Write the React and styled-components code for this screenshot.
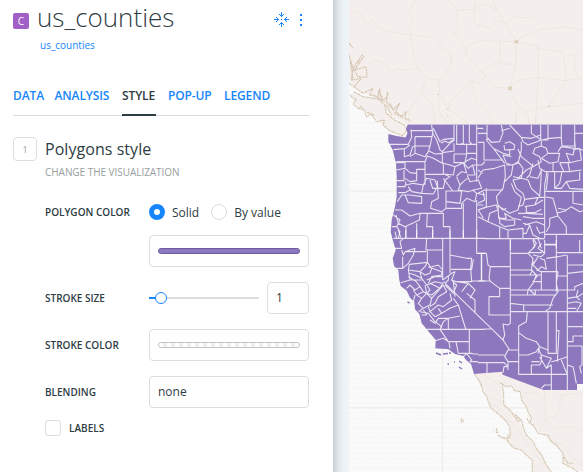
import React from "react";
import styled, { createGlobalStyle } from "styled-components";

const Global = createGlobalStyle`
  * { box-sizing: border-box; }
  body { margin: 0; background: #fff; font-family: "Open Sans", sans-serif; color: #2e3c43; }
`;

const Layout = styled.div`
  display: flex;
  width: 583px;
  height: 472px;
  overflow: hidden;
`;
const Panel = styled.aside`
  width: 333px;
  flex: none;
  padding: 0 24px 0 13px;
  background: #fff;
`;
const Gutter = styled.div`
  width: 16px;
  flex: none;
  background: linear-gradient(90deg, #cdd0d3 0, #d8dcdf 3px, #e5e9ed 6px, #edf2f6 10px, #eff4f8 16px);
`;
const Header = styled.header`
  display: flex;
  height: 36px;
  align-items: flex-start;
`;
const Badge = styled.span`
  width: 16px;
  height: 16px;
  margin: 13px 8px 0 0;
  border-radius: 2px;
  background: #a35fc8;
  color: #fff;
  font-size: 10px;
  line-height: 16px;
  text-align: center;
`;
const Title = styled.h1`
  flex: 1;
  margin: 0;
  font-size: 26px;
  font-weight: 300;
  line-height: 34px;
`;
const Actions = styled.div`
  display: flex;
  margin: 12px 6px 0 0;
  gap: 10px;
`;
const Source = styled.a`
  display: block;
  height: 18px;
  margin-left: 27px;
  font-size: 10px;
  line-height: 19px;
  color: #1785fb;
`;
const Tabs = styled.nav`
  display: flex;
  gap: 12px;
  height: 37px;
  margin-top: 25px;
  border-bottom: 1px solid #ddd;
`;
const Tab = styled.a`
  height: 37px;
  width: ${(p) => p.$w}px;
  white-space: nowrap;
  font-size: 12px;
  font-weight: 600;
  line-height: 33px;
  letter-spacing: -0.12px;
  color: ${(p) => (p.$active ? "#2e3c43" : "#1785fb")};
  border-bottom: ${(p) => (p.$active ? "2px solid #2e3c43" : "0")};
`;
const Section = styled.section`
  display: flex;
  margin-top: 21px;
  gap: 8px;
`;
const Step = styled.span`
  width: 24px;
  height: 24px;
  border: 1px solid #ddd;
  border-radius: 4px;
  color: #979ea1;
  font-size: 9px;
  line-height: 24px;
  text-align: center;
`;
const Body = styled.div`
  flex: 1;
`;
const Heading = styled.h2`
  margin: 0;
  font-size: 16px;
  font-weight: 400;
  line-height: 24px;
  letter-spacing: 0.05px;
`;
const Hint = styled.p`
  margin: 0 0 20px;
  font-size: 10px;
  line-height: 22px;
  letter-spacing: -0.04px;
  color: #979ea1;
`;
const Row = styled.div`
  display: flex;
  align-items: center;
  height: ${(p) => p.$h || 32}px;
  margin-bottom: ${(p) => p.$gap || 0}px;
`;
const Label = styled.label`
  width: 104px;
  flex: none;
  font-size: 10px;
  font-weight: 600;
  white-space: nowrap;
`;
const Choice = styled.span`
  display: flex;
  align-items: center;
  gap: 7px;
  font-size: 12px;
  margin-right: 12px;
`;
const Radio = styled.i`
  width: 16px;
  height: 16px;
  border-radius: 50%;
  background: #fff;
  border: ${(p) => (p.$on ? "5px solid #1785fb" : "1px solid #ddd")};
`;
const Field = styled.div`
  display: flex;
  align-items: center;
  width: ${(p) => p.$w || 160}px;
  height: 32px;
  padding: 0 8px;
  border: 1px solid #ddd;
  border-radius: 4px;
  font-size: 12px;
  line-height: 16px;
`;
const Swatch = styled.div`
  flex: 1;
  height: 6px;
  border-radius: 3px;
  border: 1px solid ${(p) => (p.$solid ? "#6f5b9f" : "#c4c4c4")};
  background: ${(p) =>
    p.$solid ? "#8d79c0" : "repeating-conic-gradient(#eee 0 25%, #fff 0 50%) 0 0 / 8px 8px"};
`;
const Slider = styled.div`
  display: flex;
  align-items: center;
  width: 110px;
  margin-right: 8px;
`;
const Track = styled.i`
  height: 2px;
  width: ${(p) => p.$w}px;
  background: ${(p) => (p.$filled ? "#1785fb" : "#ddd")};
`;
const Knob = styled.i`
  width: 12px;
  height: 12px;
  border: 1px solid #1785fb;
  border-radius: 50%;
`;
const Checkbox = styled.i`
  width: 16px;
  height: 16px;
  margin-right: 8px;
  border: 1px solid #ddd;
  border-radius: 3px;
`;
const MapSvg = styled.svg`
  display: block;
  flex: none;
  background: #fafafa;
`;

const ROADS_NORTH = `M48 25 L62 38 L75 30 L100 75 L115 58 L135 80 L165 95 L235 105 L245 190 L256 205 L285 237 L318 241 L320 280 L345 328 L355 300 L385 275 L415 242 L440 250 L460 225
M245 105 L300 112 L330 145 L355 160 L355 195 L330 230 L320 240 M235 105 L228 85 L240 60 L228 38 L240 10 L255 0 M345 0 L370 30 L375 80 L360 103 L375 110 L395 140 L400 165 L435 205 L490 262 L530 265 L550 310 L585 350 L590 375
M395 160 L410 135 L445 122 L550 125 L570 110 L620 90 L690 80 L750 90 M370 30 L425 28 L450 12 L490 28 L515 70 L550 125 M425 0 L423 70 L470 85 L490 60 L515 70 L545 50 L600 55 M480 0 L492 30 M550 125 L550 190 L530 265 M550 125 L615 140 L615 235 L607 375 M615 145 L690 155 L700 240 L645 320 L575 337 M440 215 L490 187 L545 195 M502 125 L502 185 M530 260 L565 240 L620 232 L690 242 L750 235 M700 170 L740 160 M725 170 L725 210 L740 235
M260 205 L220 210 L190 208 L170 218 L155 190 L130 180 L110 190 M265 275 L230 330 L225 370 M265 275 L280 237 M265 275 L300 315 L305 370 M315 283 L320 340 L345 370 M345 328 L375 345 L410 375 M415 242 L430 310 L460 330 L480 375 M550 330 L550 375 M645 320 L750 310`;
const COAST = `M48 130 L60 143 M48 165 L60 205 L88 165 L92 170 L65 210 L100 200 L102 232 L75 230 L60 205 L55 240 L85 235 L65 258 M52 185 L60 235 M70 190 L80 180 M48 250 L90 280 L120 265 L110 285 L135 290 L140 265 L145 300 L160 295 L165 275 L160 305 L180 330 L200 310 L185 340 L205 350 L220 335 L215 355 L233 362
M62 275 L90 290 L135 297 L155 315 L160 340 L185 360 L215 375 L222 390 L210 407 L170 392 L150 375 L155 360 L130 365 L115 342 L100 350 L95 330 L75 325 L60 312 L70 300 L50 285 M80 318 L92 325 M102 337 L125 345 M170 310 L180 325 M120 285 L155 305 M135 275 L150 295 M160 315 L175 345 M190 335 L210 355`;

const NORTHWEST = `M27 103 H85 L95 82 L93 58 M95 62 H160 M105 80 L155 79 M40 119 L75 116 L90 105 M73 115 V140 L90 135 L98 110 L105 108 H150 M105 80 V130 L90 140 M155 45 L158 70 L155 85 L150 108 L145 125 L135 140 L105 130 M160 55 L170 75 L180 95 L190 88 L222 85 M158 70 L170 90 L180 120 L187 125 L210 100 L222 92 V45
M230 45 V103 H290 M250 45 V100 L240 103 M268 44 V95 L275 102 M290 45 V215 M310 55 H290 M183 100 L195 93 L205 98 L220 90 M145 122 L165 132 L187 130 V160 L160 145 L142 138 L135 155 H50 M187 128 L222 123 V100 M222 132 H260 V103 M260 130 H290 M222 132 V158 H255 L260 132 M255 155 L275 145 L290 150
M45 158 H75 V175 M135 157 V225 M135 193 H190 V160 L210 165 M192 192 L220 195 L225 170 L210 165 M225 170 L250 158 L260 188 L245 185 L230 198 M250 158 L265 175 L278 165 L285 195 H260 M280 165 L305 165 L315 155 M50 180 L75 175 L90 188 L110 190 V178 H135 M72 180 V212 H50 M75 205 L90 215 L110 212 V190
M52 230 H75 L78 215 M78 225 L100 220 L130 225 L125 250 L95 245 L85 230 M55 248 H75 L90 240 M52 275 L65 255 L90 255 L125 260 V280 L85 278 L75 255 M125 250 L160 252 L172 230 L165 210 L140 205 L130 225 M150 210 L158 235 H190 L195 210 L210 200 L192 192 M172 212 L175 265 L155 275 L152 295 L185 305 L198 295 V243 H245 L240 280 L200 275 M45 300 L65 300 L90 318 L120 310 L118 330 L75 350 L55 340 L48 315
M120 310 H190 V350 H210 V385 M142 310 L140 350 H158 V385 M78 350 V385 M110 340 V385 M245 280 V295 L200 295 M250 280 V385 M290 270 V385 M190 205 L205 225 L218 243 M230 200 L240 225 L235 240 L265 245 L280 240 L305 235 L295 210 L270 215 L262 198 M240 225 L250 215 L262 205 M245 280 L260 265 L285 275 L290 250 L278 240 M290 250 L315 255 M292 285 H310 M295 300 L310 325 M40 315 L60 330 L50 350 L60 365 L55 385 M35 350 L50 350`;
const ROCKIES = `M27 45 V85 L40 95 M0 70 H27 M0 97 H18 V150 H75 M70 45 L75 68 L65 95 L40 97 L30 85 L25 90 L50 120 L80 160 M70 62 L95 55 M95 45 L130 82 L160 85 L188 75 M160 45 V70 L190 90 M188 45 V90 H210 V45 M250 45 V83 L252 108 H290 V45 M290 70 H315 M290 90 L292 115 L315 120
M130 82 L135 95 L150 105 L190 90 L215 85 L250 82 M80 100 L95 95 L110 105 L108 118 L80 120 L78 105 M95 118 V135 L75 130 L45 115 M130 95 V120 L120 160 L100 165 L85 160 L75 135 L100 140 M120 118 L130 140 L155 160 L165 170 L190 155 L185 140 L165 130 L170 115 L190 108 L205 115 L210 130 L190 145 M190 108 V93 M190 145 L215 160 L240 155 L245 130 L210 130 M240 125 L250 110 L290 115 L285 135 L265 130 L275 158 L245 158 M285 120 L305 115 L310 150 L275 158
M225 158 V185 H202 L185 175 L180 150 M245 158 L258 185 H225 M258 185 L275 185 L270 158 M275 185 L310 180 M230 185 V235 L245 220 L252 185 M210 190 L205 240 M230 235 L250 235 L265 215 L305 210 V185 M265 215 L275 235 L315 238
M0 205 L15 180 L50 175 L80 165 L82 200 L75 235 L55 260 L60 285 L75 300 L85 295 M0 180 L15 190 M0 250 L20 240 H75 M25 235 V290 L0 300 M15 240 L20 270 L0 280 M0 300 L30 290 L55 285 L60 300 L35 310 L30 335 L0 320 M85 165 H105 L100 195 L80 215 M105 165 L120 155 L135 175 L130 205 L105 200 M120 205 L145 180 L175 165 M145 205 L155 195 L165 160 M155 200 L180 205 L190 180 M190 180 L188 225 L185 258 L160 235 L150 210 L130 205 L105 210 L115 235 L135 250 L140 268 L185 262 L198 262 M100 220 L110 245 L130 262 L120 300 L95 310 L65 290
M200 260 V385 M200 244 H315 M207 185 L200 225 V260 M200 260 L225 265 L240 318 L215 325 V347 L205 365 M240 318 L265 350 V373 H315 M200 373 H265 M285 245 V280 L315 285 M240 295 L265 300 L280 290 L305 305 L315 302 M235 310 L265 302 M235 373 V415
M140 268 L135 285 L120 290 M140 290 L170 285 L180 262 M145 290 V308 H170 L190 298 M170 285 L195 270 M120 310 H145 L195 313 M135 320 L165 325 H198 M60 285 L62 325 L85 330 H110 V345 L80 350 L65 340 L65 320 M65 325 L85 325 L80 310 L105 325 L130 330 M30 335 L65 350 V385 M65 350 L90 360 L135 355 V385 M90 362 V385 M135 340 L155 345 L165 375 L185 385 M140 345 L175 335 L200 345 M155 345 L145 370 L135 370 M175 350 L185 370 L200 365 M165 385 L175 400 L165 415 M180 385 L190 415 M20 386 H200 M97 386 V420 M200 403 H235`;
const CALIFORNIA = `M40 25 H315 M77 0 V25 M110 0 V25 M158 0 V25 M210 0 V25 M250 0 V25 M290 0 V25 M55 0 L62 22 M45 5 L50 25 M45 55 H65 L60 35 L70 25 M65 60 L70 75 L75 65 L105 55 L100 75 L85 100 L68 115 H50 M68 80 V115 M140 25 L138 60 H188 M75 65 H138 M142 60 V97 L88 103 L85 120 L90 150 L62 158 M188 25 V150 M210 25 V130 M210 75 L225 78 L260 85 H275 L272 115 L275 155 H230 M280 88 L275 118 H213 M305 70 V153 H275 M290 25 V70 H315 M300 153 H315
M85 120 L120 125 L135 110 L142 97 M120 125 L125 145 L105 135 L88 130 M142 97 L155 115 L150 130 L135 135 L120 125 M145 110 L185 125 V135 L155 140 L145 160 M155 110 L175 105 L188 120 M140 150 L165 140 L188 140 M125 145 L140 165 L165 155 L188 160 L180 175 L150 160 M90 150 L105 150 L120 170 L105 180 L90 165 L80 175 M85 140 L110 155 M105 150 L125 150 M120 170 L130 185 L110 195 L100 180 M135 165 L140 190 L130 185 M140 165 L150 180 L140 190 L155 195 L185 170 M105 195 L100 215 M110 195 L125 205 L115 220 L130 235 M125 205 L140 190 L155 205 L150 225 L130 235 L115 245 M155 205 L190 165 L200 185 L175 200 L165 220 L150 230 M188 150 L215 130 L225 125 L215 150 L230 165 L220 190 L195 165 M190 155 L315 277 M205 135 V150 L195 160 M220 155 L225 200 M215 150 L230 155 L265 160 L245 185 M265 160 L285 180 L270 205 M260 190 L285 210 V250 M210 190 L215 210 L190 230 L175 225 L150 245 L145 230 M175 235 L185 250 L210 235 L235 225 L220 205 M150 245 L165 260 L185 250 M120 245 L145 250 L165 275 L185 290 L180 298 M130 240 L140 255 L125 255 M150 270 L165 280 L175 265 L205 265 L240 258 M205 265 V297 M180 298 L190 275 L205 265 M235 225 L257 297 M140 298 H315 M180 298 L205 335 L190 325 L165 332 M268 298 V370 M207 335 H268 M207 335 L210 355 M228 335 L235 370 M235 370 H275 L280 372 H294 M250 380 L260 370 L275 390 L270 395 H294`;
const SOUTHWEST = `M0 40 H25 L30 75 L37 80 H97 M10 40 V123 M37 80 L33 115 L38 125 L65 145 H97 M0 123 H35 M65 145 V170 H33 V225 H97 M21 247 L40 265 L75 300 L95 330 M97 0 V250 L90 255 L75 252 L80 285 L75 300 M97 40 H150 M97 90 H160 M97 105 H190 M97 150 H268 M97 165 H235 M97 190 L140 195 H225 M137 195 V215 M97 215 H315 M21 267 H40
M200 0 V40 L180 25 L190 10 M165 0 L170 20 L150 40 L165 55 L160 90 L175 105 L165 130 L150 150 L148 165 M150 38 H190 V30 L200 40 L190 50 L165 45 M180 50 L165 75 L180 90 L190 80 L205 88 L200 60 L185 55 M175 90 L190 95 V150 M190 95 H240 M205 55 L240 50 L265 45 M235 0 V155 M200 15 H235 M235 38 H315 M235 108 H268 M268 45 V450 M160 75 L175 60 M165 90 L155 105 M180 105 L165 125 H190 M155 150 L172 165 V150 M240 95 L235 130 L240 155 L225 175 L215 205 L200 215 M268 75 H315 M268 100 L315 95 M315 130 L290 140 V150 L268 150 M268 175 L300 170 L315 160 M268 190 L295 185 L310 190 L295 215 M268 205 H295 M300 150 L295 170 L305 180 M305 0 V38
M148 217 L145 245 L122 258 V403 H268 M122 278 L145 295 L175 305 L185 320 L175 335 L150 345 H122 M210 217 V340 H235 V217 M235 272 H243 L238 365 M185 320 L210 330 M180 325 L190 345 L220 355 L205 385 L185 350 M185 325 L180 340 M190 345 V365 L185 375 H160 V403 M160 365 H185 M205 385 L220 375 V450 M220 365 L240 360 L268 350 M250 360 L260 385 L268 403 M268 260 H315 M315 288 H285 V305 H268 M268 318 H312 V375 L305 380 L310 400 M268 375 L285 380 L290 403 L295 430 M190 445 L200 435 H220 M122 330 H90 L80 350 L90 365 H122 M0 345 H80 M0 368 H78 L90 380 V390 M27 368 V400 M90 365 V380 H78 L75 398`;

const BAJA = `M425 103 L438 120 L450 155 L462 170 L466 187 L475 205 L500 225 L520 245 L530 260 L530 290 L515 292 L495 285 L505 292 L545 325 L565 330 L585 350 L600 360 L600 396 H655 L640 375 L630 345 L605 315 L590 300 L575 280 L570 260 L545 235 L550 225 L530 205 L510 185 L512 165 L505 135 L500 125 L508 95 Z`;
const MAINLAND = `M500 100 L640 151 H750 V396 L720 385 L690 370 L690 340 L655 305 L620 275 L590 250 L595 235 L580 200 L565 180 L565 160 L545 150 L535 138 L520 140 L500 127 Z`;

const third = (x, y) => `translate(${x} ${y}) scale(0.33333)`;

function CountyMap() {
  return (
    <MapSvg width="234" height="472" viewBox="349 0 234 472" fill="none">
      <defs>
        <pattern id="waves" width="6" height="5" patternUnits="userSpaceOnUse">
          <path d="M0 3 L1.5 2 L3 3 L4.5 4 L6 3" stroke="#f2f2f1" strokeWidth=".7" fill="none" />
        </pattern>
      </defs>
      <rect x="349" width="234" height="472" fill="url(#waves)" />
      <path d="M349 191H400M349 407.7H583M442.5 340V472" stroke="#f2eeeb" strokeWidth="1.4" />
      <g transform={third(333, 0)} strokeLinejoin="round">
        <path d="M48 0 H750 V380 H228 L205 362 L175 350 L150 310 L125 292 L90 280 L62 262 L48 235Z" fill="#f4efec" />
        <path d="M62 275 L90 290 L135 297 L155 315 L160 340 L185 360 L215 375 L222 390 L210 412 L170 395 L150 375 L115 345 L75 325 L50 285Z" fill="#f4efec" />
        <path d={ROADS_NORTH} stroke="#ebe2da" strokeWidth="2" />
        <path d={COAST} stroke="#d3c3ae" strokeWidth="3.4" strokeDasharray="7 1.5 4 2" />
        <path d="M544 120l12 10M556 120l-12 10M525 260l12 10M537 260l-12 10M315 282l3 3M646 318l3 3M343 327l3 3M343 346l3 3" stroke="#cdbb9c" strokeWidth="3" />
      </g>
      <g transform={third(333, 340)} strokeLinejoin="round">
        <path d={BAJA} fill="#f4efec" />
        <path d={MAINLAND} fill="#f4efec" />
        <path d="M430 110 L445 125 L440 140 M455 105 L500 135 M470 190 L510 210 M475 170 L510 190 M500 225 L540 250 L570 290 L595 330 L630 370 M635 152 L637 240 L615 280 M637 240 L675 225 L685 165 M637 240 L665 265 L715 260 L750 275 M570 160 L600 155 L635 180 M685 165 L730 160 M720 135 L750 170 M650 300 L690 315 L715 350 L750 375" stroke="#ece3db" strokeWidth="2" />
        <path d="M425 103 L438 122 L445 135 L450 155 L462 170 L466 187 L475 205 L500 225 L520 245 L530 260 L532 290 L525 295 L525 280 M495 285 L505 292 L520 295 L530 312 L545 325 L565 330 L585 350 L598 360 V396 M508 130 L512 165 L512 195 L530 210 L545 230 L565 240 L572 265 L580 285 L600 305 L610 325 L625 345 L640 375 L655 396 M500 127 L520 140 L535 138 L545 152 L562 155 L566 180 L580 200 L585 215 L595 235 L590 250 L600 255 L615 280 L630 283 L645 285 L655 305 L670 315 L690 340 L690 370 L720 385 L735 396 M547 223 L563 240 L555 245 L547 232 M582 235 L590 250 M385 235 V247 L390 246 V237 M480 270 L483 270 M490 265 L494 280 L488 275 M692 350 L705 370 L720 370" stroke="#d3c3ae" strokeWidth="3.2" strokeDasharray="8 1.5 5 2" />
      </g>
      <path
        d="M407.5 124.7 H583 V384 H577 V390 H543.7 L502.3 374.6 V371.7 L474 374 L471 364 L466 360 L463.3 356 L455 354 L448.3 349.3 L435.3 348.2 L435.7 340 L430 333.3 L421.7 323.3 L419.3 314 L415 309.3 L414.3 301.7 L410 297.7 L406.7 290.7 L400.7 286 L399.3 280 L398.3 270 L394 266 L392.7 258.3 L395.7 250 L392.7 240 L390.7 231.7 L391.7 220 L395 206.7 L396.7 196.7 L396.7 176.7 L396 163.3 L392.7 150 L388.3 141.7 V134 L396.7 136 L405.5 137.5 L407.5 133 L406 129.3Z"
        fill="#8d78bd"
      />
      <path d="M436 353l5 2M443 354l5-.5M449 353h2M459 361l3 2M459 367l3 2M447.5 364h1.5M454 362h1M407.5 302l2 1" stroke="#8d78bd" strokeWidth="1.5" />
      <path d="M408 124.5H583" stroke="#c9bddb" strokeWidth="1" />
      <g stroke="#fff" strokeOpacity=".8" strokeWidth="3.3" strokeLinejoin="round">
        <path d={NORTHWEST} transform={third(380, 110)} />
        <path d={ROCKIES} transform={third(478, 110)} />
        <path d={CALIFORNIA} transform={third(380, 230)} />
        <path d={SOUTHWEST} transform={third(478, 240)} />
      </g>
    </MapSvg>
  );
}

const TABS = [
  ["DATA", 29.5],
  ["ANALYSIS", 55.5],
  ["STYLE", 34],
  ["POP-UP", 44],
  ["LEGEND", 47],
];

export default function App() {
  return (
    <>
      <Global />
      <Layout>
        <Panel>
          <Header>
            <Badge>C</Badge>
            <Title>us_counties</Title>
            <Actions>
              <svg width="15" height="15" viewBox="0 0 15 15" fill="#1785fb" shapeRendering="crispEdges">
                <path d="M7 0h1v5h-1zM6 3h3v1h-3zM5 2h1v1h-1zM9 2h1v1h-1z" />
                <path d="M7 10h1v5h-1zM6 11h3v1h-3zM5 12h1v1h-1zM9 12h1v1h-1z" />
                <path d="M0 7h5v1h-5zM3 6h1v3h-1zM2 5h1v1h-1zM2 9h1v1h-1z" />
                <path d="M10 7h5v1h-5zM11 6h1v3h-1zM12 5h1v1h-1zM12 9h1v1h-1z" />
                <path d="M7 7h1v1h-1z" />
              </svg>
              <svg width="4" height="15" viewBox="0 0 4 15" fill="#1785fb">
                <path d="M1 2h2v2H1zM1 7h2v2H1zM1 12h2v2H1z" />
              </svg>
            </Actions>
          </Header>
          <Source>us_counties</Source>
          <Tabs>
            {TABS.map(([name, w]) => (
              <Tab key={name} $w={w} $active={name === "STYLE"}>{name}</Tab>
            ))}
          </Tabs>
          <Section>
            <Step>1</Step>
            <Body>
              <Heading>Polygons style</Heading>
              <Hint>CHANGE THE VISUALIZATION</Hint>
              <Row $h={18} $gap={14}>
                <Label>POLYGON COLOR</Label>
                <Choice><Radio $on />Solid</Choice>
                <Choice><Radio />By value</Choice>
              </Row>
              <Row $gap={15}>
                <Label />
                <Field><Swatch $solid /></Field>
              </Row>
              <Row $gap={15}>
                <Label>STROKE SIZE</Label>
                <Slider><Track $filled $w={6} /><Knob /><Track $w={92} /></Slider>
                <Field $w={42}>1</Field>
              </Row>
              <Row $gap={15}>
                <Label>STROKE COLOR</Label>
                <Field><Swatch /></Field>
              </Row>
              <Row $gap={12}>
                <Label>BLENDING</Label>
                <Field>none</Field>
              </Row>
              <Row $h={16}>
                <Checkbox />
                <Label>LABELS</Label>
              </Row>
            </Body>
          </Section>
        </Panel>
        <Gutter />
        <CountyMap />
      </Layout>
    </>
  );
}
